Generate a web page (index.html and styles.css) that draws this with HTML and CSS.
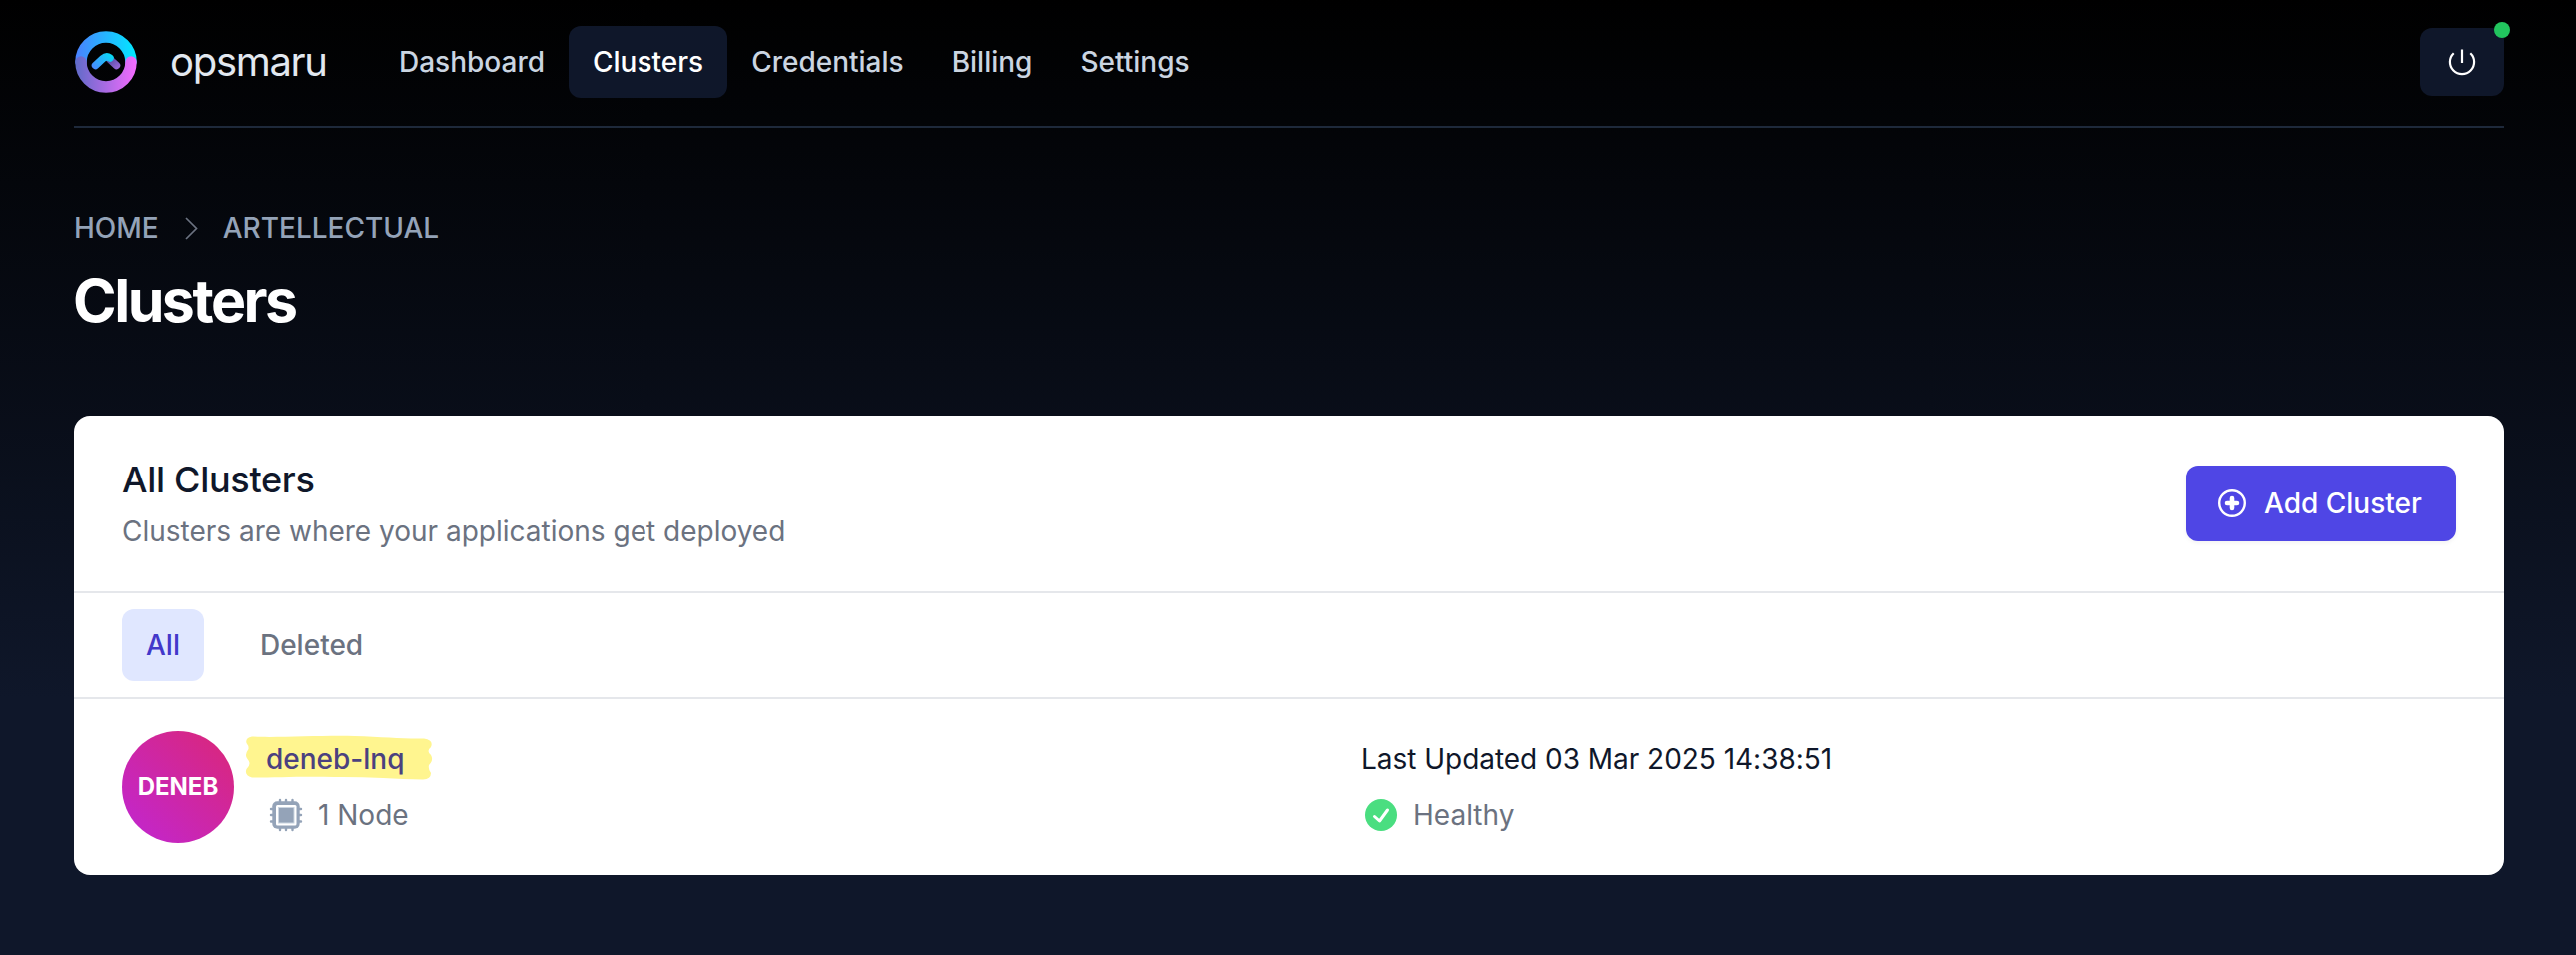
FILE: index.html
```html
<!DOCTYPE html>
<html lang="en">
<head>
<meta charset="utf-8">
<title>Clusters</title>
<link rel="stylesheet" href="styles.css">
</head>
<body>
<header class="topbar">
  <svg class="logo" viewBox="0 0 62 62" fill="none" stroke-linecap="round">
    <defs>
      <linearGradient id="sky" x1="0" y1="0" x2="62" y2="0" gradientUnits="userSpaceOnUse"><stop offset="0" stop-color="#4b80ff"/><stop offset="1" stop-color="#00eaff"/></linearGradient>
      <linearGradient id="orchid" x1="0" y1="0" x2="62" y2="0" gradientUnits="userSpaceOnUse"><stop offset="0" stop-color="#5f6bc8"/><stop offset="1" stop-color="#f66bff"/></linearGradient>
      <linearGradient id="roofL" x1="18" y1="38" x2="36" y2="22" gradientUnits="userSpaceOnUse"><stop offset="0" stop-color="#4b86ff"/><stop offset="1" stop-color="#06dcf5"/></linearGradient>
      <linearGradient id="roofR" x1="34" y1="26" x2="45" y2="38" gradientUnits="userSpaceOnUse"><stop offset="0" stop-color="#4a489c"/><stop offset="1" stop-color="#a06ce0"/></linearGradient>
    </defs>
    <path d="M6 31a25 25 0 0 1 50 0" stroke="url(#sky)" stroke-width="11.5"/>
    <path d="M6 31a25 25 0 0 0 50 0" stroke="url(#orchid)" stroke-width="11.5"/>
    <path d="M35 28.500L41.500 34.500" stroke="url(#roofR)" stroke-width="7.500"/>
    <path d="M20.500 34.500L28 27.500Q31.500 24.500 35 27" stroke="url(#roofL)" stroke-width="7.500"/>
  </svg>
  <span class="brand">opsmaru</span>
  <nav class="nav">
    <a class="nav-item">Dashboard</a>
    <a class="nav-item active">Clusters</a>
    <a class="nav-item">Credentials</a>
    <a class="nav-item">Billing</a>
    <a class="nav-item">Settings</a>
  </nav>
  <button class="power" aria-label="Sign out">
    <svg width="28" height="28" viewBox="0 0 28 28" fill="none" stroke="#fff" stroke-width="2.200"><path d="M14 1.500V15"/><path d="M5.700 5.200a12.100 12.100 0 1 0 16.600 0"/></svg>
    <span class="status"></span>
  </button>
</header>
<main>
  <div class="crumbs">
    <span>HOME</span>
    <svg width="13" height="23" viewBox="0 0 13 23" fill="none" stroke="#6b7280" stroke-width="1.700"><path d="M1 1L11.500 11.500L1 22"/></svg>
    <span>ARTELLECTUAL</span>
  </div>
  <h1 class="title">Clusters</h1>
  <section class="card">
    <div class="card-head">
      <div>
        <h2 class="card-title">All Clusters</h2>
        <p class="card-sub">Clusters are where your applications get deployed</p>
      </div>
      <button class="add">
        <svg width="28" height="28" viewBox="0 0 28 28" fill="none" stroke="#fff" stroke-linecap="round"><circle cx="14" cy="14" r="12.800" stroke-width="2.400"/><path d="M14 9v10M9 14h10" stroke-width="4.600"/></svg>
        <span>Add Cluster</span>
      </button>
    </div>
    <div class="tabs">
      <a class="tab selected">All</a>
      <a class="tab">Deleted</a>
    </div>
    <div class="row">
      <div class="avatar">DENEB</div>
      <div class="cols">
        <div class="col">
          <div class="line name">
            <svg class="marker" width="188" height="45" viewBox="0 0 189 45" preserveAspectRatio="none"><path d="M7 1.500C30 3 80 0 110 1C140 2 160 4 180 3.500Q190 5 187 12Q182 16 187 20Q190 25 185 30Q184 34 187 38Q187 44 179 44.500C150 44 120 41.500 90 42C60 41 30 42.500 7 42.500Q-1 40 1.500 34Q7 29 2.500 24Q-1 20 3.500 14Q4 11 1.500 8Q0 3 7 1.500Z" fill="#fff58f"/></svg>
            <span class="name-text">deneb-lnq</span>
          </div>
          <div class="line meta">
            <svg width="40" height="34" viewBox="0 0 40 34"><g stroke="#94a3b8" stroke-width="2.400" stroke-linecap="round"><path d="M14 2v5M20 2v5M26.500 2v5M14 27v5M20 27v5M26.500 27v5M5 11h5M5 17h5M5 23.500h5M30 11h5M30 17h5M30 23.500h5"/></g><rect x="6.300" y="3.300" width="27.400" height="27.400" rx="5" fill="#94a3b8"/><rect x="10" y="7" width="20.500" height="20.500" rx="1.500" fill="#fff"/><rect x="12" y="9" width="16.500" height="16.500" fill="#cbd5e1"/><rect x="13" y="10" width="14.500" height="14.500" fill="#94a3b8"/></svg>
            <span>1 Node</span>
          </div>
        </div>
        <div class="col">
          <div class="line updated">Last Updated 03 Mar 2025 14:38:51</div>
          <div class="line meta">
            <svg width="40" height="34" viewBox="0 0 40 34" fill="none"><circle cx="20" cy="17" r="16" fill="#4ade80"/><path d="M13.500 18.500L18.500 23L26.500 12" stroke="#fff" stroke-width="3" stroke-linecap="round" stroke-linejoin="round"/></svg>
            <span>Healthy</span>
          </div>
        </div>
      </div>
    </div>
  </section>
</main>
</body>
</html>
```
FILE: styles.css
```css
* { box-sizing: border-box; margin: 0; }
svg { flex: none; display: block; }
body {
  min-height: 956px;
  padding: 0 72px 0 74px;
  background: linear-gradient(to bottom, #000 0, #0f172a 700px);
  font: 400 28px/40px Inter, "Liberation Sans", sans-serif;
  color: #fff;
}
button { border: 0; font: inherit; color: inherit; }
.topbar { display: flex; align-items: center; height: 128px; padding-bottom: 2px; border-bottom: 2px solid #1e293b; }
.logo { width: 62px; height: 62px; margin-left: 1px; }
.brand { width: 155px; margin-left: 33px; font-size: 40px; letter-spacing: -1.300px; color: #e2e8f0; white-space: nowrap; }
.nav { display: flex; margin-left: 50px; flex: 1; }
.nav-item { padding: 16px 24px; border-radius: 12px; font-weight: 500; color: #cbd5e1; }
.nav-item.active { background: #0f172a; color: #fff; }
.power { position: relative; display: flex; align-items: center; justify-content: center; width: 84px; height: 68px; padding: 0; border-radius: 12px; background: #0f172a; }
.status { position: absolute; top: -6px; right: -6px; width: 16px; height: 16px; border-radius: 50%; background: #22c55e; }
.crumbs { display: flex; align-items: center; margin-top: 80px; height: 40px; font-weight: 500; color: #94a3b8; }
.crumbs svg { margin: 0 25px 0 26px; }
.title { margin-top: 17px; margin-left: -1px; font-size: 59px; line-height: 72px; font-weight: 700; letter-spacing: -2.500px; }
.card { margin-top: 79px; height: 460px; border-radius: 16px; background: #fff; }
.card-head { display: flex; align-items: center; justify-content: space-between; height: 178px; padding: 0 48px; border-bottom: 2px solid #e5e7eb; }
.card-title { font-size: 36px; line-height: 48px; font-weight: 500; letter-spacing: -.300px; color: #0f172a; }
.card-sub { margin-top: 8px; color: #6b7280; }
.add { display: flex; align-items: center; gap: 18px; width: 270px; height: 76px; padding: 0 32px; border-radius: 12px; background: #4f46e5; font-weight: 500; white-space: nowrap; box-shadow: 0 2px 4px rgba(0, 0, 0, .05); }
.tabs { display: flex; gap: 32px; height: 106px; padding: 16px 48px; border-bottom: 2px solid #e5e7eb; }
.tab { height: 72px; padding: 16px 24px; border-radius: 12px; font-weight: 500; color: #6b7280; }
.tab.selected { background: #e0e7ff; color: #4338ca; }
.row { display: flex; padding: 32px 48px; }
.avatar { display: flex; align-items: center; justify-content: center; width: 112px; height: 112px; border-radius: 50%; background: linear-gradient(to top right, #c026d3, #db2777); font-size: 24px; font-weight: 700; }
.cols { flex: 1; display: grid; grid-template-columns: 1062px 1062px; column-gap: 34px; padding-left: 32px; }
.col { padding-top: 8px; }
.line { display: flex; align-items: center; height: 40px; }
.name { position: relative; font-weight: 500; color: #4b417f; }
.marker { position: absolute; left: -21px; top: -4px; }
.name-text { position: relative; }
.updated { color: #0f172a; letter-spacing: -.030px; }
.meta { margin-top: 16px; gap: 12px; color: #6b7280; }
```
